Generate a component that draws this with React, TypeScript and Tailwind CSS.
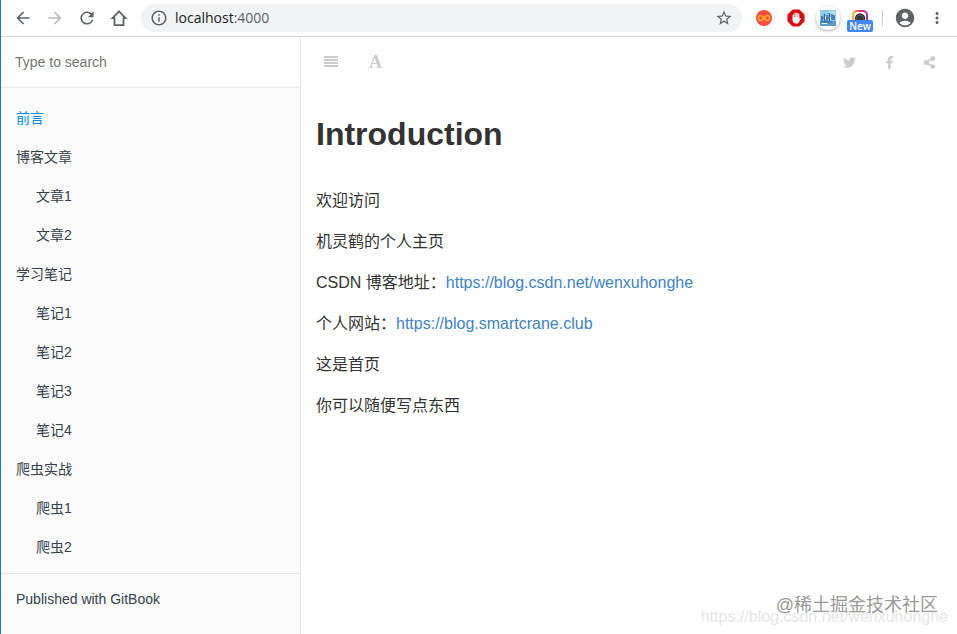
import { FormEvent, useState } from "react";
import {
  MdAccountCircle,
  MdArrowBack,
  MdArrowForward,
  MdInfoOutline,
  MdMoreVert,
  MdRefresh,
  MdStarBorder,
} from "react-icons/md";
import { FaFacebookF, FaTwitter, FaShareAlt } from "react-icons/fa";

const chapters = [
  { title: "前言", level: 0 },
  { title: "博客文章", level: 0 },
  { title: "文章1", level: 1 },
  { title: "文章2", level: 1 },
  { title: "学习笔记", level: 0 },
  { title: "笔记1", level: 1 },
  { title: "笔记2", level: 1 },
  { title: "笔记3", level: 1 },
  { title: "笔记4", level: 1 },
  { title: "爬虫实战", level: 0 },
  { title: "爬虫1", level: 1 },
  { title: "爬虫2", level: 1 },
];

function HomeIcon() {
  return (
    <svg viewBox="0 0 18 18" className="w-[18px] h-[18px]" aria-hidden="true">
      <path
        d="M2.500 9.200 9 2.400l6.500 6.800h-2v6.900h-9V9.200z"
        fill="none"
        stroke="currentColor"
        strokeWidth="1.800"
      />
    </svg>
  );
}

function InfinityIcon() {
  return (
    <svg viewBox="0 0 16 16" className="w-4 h-4" aria-hidden="true">
      <circle cx="8" cy="8" r="8" fill="#fb4b3d" />
      <path
        d="M8 8C6.800 6.400 5.900 5.600 4.800 5.600a2.400 2.400 0 0 0 0 4.800C5.900 10.400 6.800 9.600 8 8s2.100-2.400 3.200-2.400a2.400 2.400 0 0 1 0 4.800C10.100 10.400 9.200 9.600 8 8z"
        fill="none"
        stroke="#ffb128"
        strokeWidth="1.500"
      />
    </svg>
  );
}

function AdblockIcon() {
  return (
    <svg viewBox="0 0 18 18" className="w-[18px] h-[18px]" aria-hidden="true">
      <path
        d="M5.600 1h6.800L17 5.600v6.800L12.400 17H5.600L1 12.400V5.600z"
        fill="#e00710"
        stroke="#e00710"
        strokeLinejoin="round"
      />
      <path
        d="M6.300 10V6.100M8.100 9V4.300M9.900 9V4.100M11.600 9.500V5.300"
        stroke="#fff"
        strokeWidth="1.400"
        strokeLinecap="round"
      />
      <path
        d="M5.600 8.500h6.700v1.700l.8-1c.5-.5 1.100 0 .8.600l-2 3.400c-.5.900-1.100 1.200-2 1.200H8.500c-1.800 0-2.900-1.400-2.900-3.100z"
        fill="#fff"
      />
    </svg>
  );
}

function PictureIcon() {
  return (
    <svg viewBox="0 0 16 16" className="w-4 h-4" aria-hidden="true">
      <path d="M0 0h16v16H0z" fill="#8fcbe6" />
      <path d="M0 11h16v5H0z" fill="#5b9cc4" />
      <path d="M9 1h6v4H9z" fill="#b5e3e6" />
      <path
        d="M2 6v6M4.500 4v9M7 5v7M9.500 3v8M12 4v6M14 5v5"
        stroke="#285e97"
        strokeWidth="1.300"
      />
      <path d="M1 8h13M3 12h9" stroke="#3478ad" />
      <path d="M5.500 6v3M10.500 7v3M2 13.500h5" stroke="#e5f7fb" />
    </svg>
  );
}

function CameraIcon() {
  return (
    <svg viewBox="0 0 16 16" className="w-4 h-4" aria-hidden="true">
      <defs>
        <linearGradient id="lens" x1="0" y1="0" x2="1" y2="0">
          <stop offset="0" stopColor="#ffb52e" />
          <stop offset="0.450" stopColor="#ee3f68" />
          <stop offset="1" stopColor="#a32bc6" />
        </linearGradient>
      </defs>
      <rect x="1" y="1" width="14" height="14" rx="4" fill="#fff" stroke="url(#lens)" strokeWidth="2" />
      <circle cx="8" cy="8.500" r="5.200" fill="#333" />
      <circle cx="8" cy="8.500" r="3.500" fill="none" stroke="#777" strokeWidth="0.600" />
    </svg>
  );
}

function JustifyIcon() {
  return (
    <svg viewBox="0 0 14 12" className="w-[14px] h-3" aria-hidden="true">
      <path d="M0 1h14M0 4h14M0 7h14M0 10h14" stroke="currentColor" strokeWidth="2" />
    </svg>
  );
}

function BrowserBar() {
  return (
    <header className="flex items-center h-[37px] pl-[13px] pr-[11px] bg-white border-b border-[#d5d9dc] text-[#5f6368]">
      <div className="flex items-center gap-[14px]">
        <button aria-label="Back">
          <MdArrowBack className="w-[18px] h-5 scale-110" />
        </button>
        <button aria-label="Forward" className="text-[#babcbe]">
          <MdArrowForward className="w-[18px] h-5 scale-110" />
        </button>
        <button aria-label="Reload">
          <MdRefresh className="w-[18px] h-5 scale-110" />
        </button>
        <button aria-label="Home">
          <HomeIcon />
        </button>
      </div>
      <div className="flex flex-1 items-center h-7 ml-[13px] px-[9px] rounded-full bg-[#f1f3f4]">
        <MdInfoOutline className="w-[18px] h-[18px]" />
        <div className="flex-1 ml-[7px] font-['Open_Sans','Noto_Sans',sans-serif] text-sm leading-5">
          <span className="text-[#202124]">localhost</span>:4000
        </div>
        <button aria-label="Bookmark">
          <MdStarBorder className="w-[18px] h-[18px]" />
        </button>
      </div>
      <div className="flex items-center ml-[14px]">
        <button aria-label="Infinity">
          <InfinityIcon />
        </button>
        <button aria-label="Adblock" className="ml-[15px]">
          <AdblockIcon />
        </button>
        <button
          aria-label="Pictures"
          className="flex items-center justify-center w-6 h-6 ml-[11px] rounded-full bg-white shadow-[0_1px_3px_#aaa]"
        >
          <PictureIcon />
        </button>
        <button aria-label="Camera" className="relative ml-3">
          <CameraIcon />
          <span className="absolute top-[10px] -left-[5px] w-[26px] h-3 rounded-[2px] bg-[#4285f4] font-['Open_Sans',sans-serif] text-[10px] leading-3 font-semibold text-white">
            New
          </span>
        </button>
        <div className="w-px h-4 ml-[14px] bg-[#c8cacc]" />
        <button aria-label="Profile" className="ml-[11px]">
          <MdAccountCircle className="w-[22px] h-[22px]" />
        </button>
        <button aria-label="Menu" className="ml-3">
          <MdMoreVert className="w-[18px] h-5" />
        </button>
      </div>
    </header>
  );
}

function Sidebar() {
  const [query, setQuery] = useState("");
  const handleSubmit = (e: FormEvent) => e.preventDefault();

  return (
    <aside className="w-[300px] shrink-0 border-r border-[#e7e7e7] bg-[#fafafa] text-sm text-[#364149]">
      <form onSubmit={handleSubmit} className="border-b border-[#ececec] bg-white">
        <input
          type="text"
          aria-label="Type to search"
          placeholder="Type to search"
          value={query}
          onChange={(e) => setQuery(e.target.value)}
          className="block w-full h-[50px] px-[14px] outline-none placeholder:text-[#757575]"
        />
      </form>
      <nav className="pt-[11px] pb-[6px] border-b border-[#e7e7e7]">
        <ul>
          {chapters.map((chapter, index) => (
            <li key={chapter.title}>
              <a
                href="#"
                className={`block h-[39px] leading-[39px] pr-4 ${
                  chapter.level === 0 ? "pl-[15px]" : "pl-[35px]"
                } ${index === 0 ? "text-[#008cff]" : ""}`}
              >
                {chapter.title}
              </a>
            </li>
          ))}
        </ul>
      </nav>
      <a href="#" className="block px-[15px] py-[15px] leading-5">
        Published with GitBook
      </a>
    </aside>
  );
}

function Content() {
  return (
    <main className="flex-1 min-w-0 text-[#333]">
      <div className="flex items-center h-[50px] pl-[23px] pr-[21px] text-[#ccc]">
        <button aria-label="Toggle sidebar">
          <JustifyIcon />
        </button>
        <button
          aria-label="Font settings"
          className="ml-[31px] font-['Liberation_Serif',serif] text-lg leading-5 font-bold"
        >
          A
        </button>
        <div className="flex items-center ml-auto">
          <a href="#" aria-label="Twitter">
            <FaTwitter className="w-[13px] h-[13px]" />
          </a>
          <a href="#" aria-label="Facebook" className="ml-[27px]">
            <FaFacebookF className="w-[13px] h-[13px]" />
          </a>
          <a href="#" aria-label="Share" className="ml-[27px]">
            <FaShareAlt className="w-[13px] h-[13px]" />
          </a>
        </div>
      </div>
      <article className="px-[15px] pt-[25px] text-base">
        <h1 className="mb-[30px] text-[32px] leading-[45px] font-bold">Introduction</h1>
        <div className="flex flex-col gap-[14px] leading-[27px]">
          <p>欢迎访问</p>
          <p>机灵鹤的个人主页</p>
          <p>
            CSDN 博客地址：
            <a href="https://blog.csdn.net/wenxuhonghe" className="text-[#4183c4]">
              https://blog.csdn.net/wenxuhonghe
            </a>
          </p>
          <p>
            个人网站：
            <a href="https://blog.smartcrane.club" className="text-[#4183c4]">
              https://blog.smartcrane.club
            </a>
          </p>
          <p>这是首页</p>
          <p>你可以随便写点东西</p>
        </div>
      </article>
    </main>
  );
}

export default function App() {
  return (
    <div className="relative flex flex-col min-h-screen bg-white border-l border-[#2878ae] font-['Liberation_Sans','Noto_Sans_CJK_SC',sans-serif]">
      <BrowserBar />
      <div className="flex flex-1">
        <Sidebar />
        <Content />
      </div>

      {/* Watermarks */}
      <div className="absolute right-[9px] bottom-[7px] text-base leading-5 text-[#e6e6e6]">
        https://blog.csdn.net/wenxuhonghe
      </div>
      <div className="absolute right-[19px] bottom-[17px] text-lg leading-6 text-[#999]">
        @稀土掘金技术社区
      </div>
    </div>
  );
}
